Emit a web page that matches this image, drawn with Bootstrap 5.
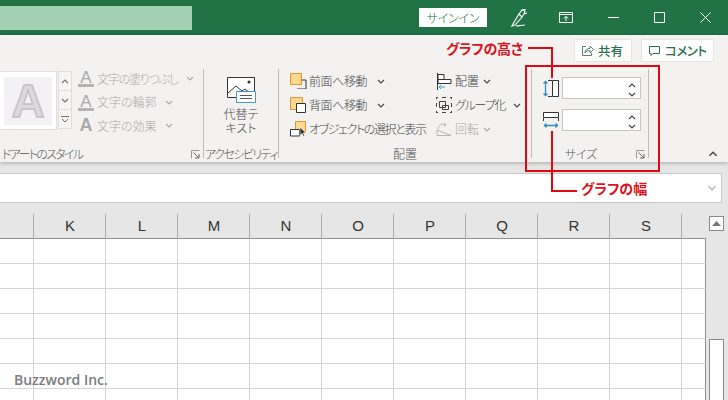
<!DOCTYPE html>
<html lang="ja">
<head>
<meta charset="utf-8">
<title>Excel</title>
<link rel="stylesheet" href="https://cdn.jsdelivr.net/npm/bootstrap@5.3.0/dist/css/bootstrap.min.css">
<style>
html,body{margin:0;width:728px;height:400px;overflow:hidden;background:#e6e6e6}
body{font-family:"Noto Sans CJK JP","Liberation Sans",sans-serif;font-size:12px;font-weight:300;line-height:14px;color:#444;font-feature-settings:"palt";position:relative}
svg{display:block;flex:none}
.xl-title{height:35px;background:#217346;padding:6px 0 5px}
.xl-search{width:192px;height:24px;background:#a3d0b4}
.xl-signin{width:68px;height:19px;background:#fff;color:#217346;margin-left:227px;margin-top:2px;line-height:19px;font-size:12px;letter-spacing:-.2px}
.xl-tbicon{position:relative}
.xl-ribbon{height:127px;background:#f3f2f1;box-shadow:0 1px 4px rgba(0,0,0,.28);position:relative}
.xl-top{height:34px;padding:4px 14px 0 0}
.xl-share{height:23px;background:#fff;border:1px solid #e6e5e4;border-radius:2px;color:#2c6e4d;font-weight:500;font-size:12.500px;padding:0 0 0 6px}
.xl-share-a{width:58px}
.xl-share-b{width:73px;margin-left:1px}
.xl-tight{letter-spacing:-.5px}
.xl-groups{height:89px}
.xl-group{height:89px;border-right:1px solid #bdbdbd;flex:none}
.xl-gbody{height:78px}
.xl-glabel{height:14px;margin-bottom:-3px;color:#555;line-height:14px;white-space:nowrap}
.xl-launch{margin-top:3px}
.xl-gallery{width:57px;height:59px;margin-top:2px;background:#fff;border:1px solid #dedede;border-left:0;padding:5px 4px}
.xl-tile{width:48px;height:48px;background:#f4f1f6;color:#dcd9de;font:700 46px/48px "Liberation Sans",sans-serif;-webkit-text-stroke:1.5px #c4c1c6;text-align:center}
.xl-spins{width:14px;margin:2px 0 0 1px}
.xl-spin{height:20px;border:1px solid #dedede;background:#f6f5f4;margin-bottom:-1px}
.xl-wa{margin:-2px 0 0 6px;color:#a8a8a8}
.xl-wa-row{height:23.5px;white-space:nowrap}
.xl-aicon{width:19px;font:400 17px/15px "Liberation Sans",sans-serif;color:#a9a9a9;text-align:center;padding-right:3px}
.xl-aicon i{display:block;height:3px;background:#b3b3b3;width:16px;margin-top:-1px}
.xl-alt{width:74px;padding-top:7px;color:#444;text-align:center}
.xl-alt-text{margin-top:3px}
.xl-arr{padding-left:11px}
.xl-cmd{height:24px;white-space:nowrap}
.xl-cmd-ic{width:19px}
.xl-col1{width:146px}
.xl-off{color:#a8a8a8}
.xl-size{padding:8px 0 0 11px}
.xl-sizerow{height:22px;margin-bottom:10px}
.xl-input{width:79px;height:22px;margin-left:3px;background:#fff;border:1px solid #c8c6c4;padding:1px 4px 0 0}
.xl-fbar{width:722px;height:30px;margin-top:11px;background:#fff;border:1px solid #c8c8c8;border-left:0;padding-right:4px}
.xl-sheet{margin-top:1px;padding-top:10px;width:706px}
.xl-scroll{width:22px;padding:12px 4px 0 3px;margin-top:1px}
.xl-up{height:15px;background:#fff;border:1px solid #8a8a8a}
.xl-thumb{height:80px;margin-top:108px;background:#fff;border:1px solid #8a8a8a}
table.xl-grid{table-layout:fixed;width:706px;border-collapse:separate;border-spacing:0;background:#fff}
.xl-grid th{height:25px;background:#e6e6e6;border-right:1px solid #ababab;border-bottom:1px solid #8f8f8f;font:400 15px/24px "Liberation Sans",sans-serif;color:#333;text-align:center;padding:0 0 0 1px}
.xl-grid td{height:25px;border-right:1px solid #d4d4d4;border-bottom:1px solid #d4d4d4;padding:0}
.xl-grid th:last-child{border-right:0}
.xl-grid td:last-child{border-right:1px solid #8f8f8f}
.xl-over{position:absolute;pointer-events:none}
.xl-red{background:#e1070f}
.xl-note{color:#dc141c;font-weight:700;font-size:14px;line-height:16px;white-space:nowrap}
.xl-mark{left:14px;top:371px;color:#7d7d7d;font:600 14px/17px "Open Sans",sans-serif}
</style>
</head>
<body>
<svg width="0" height="0" style="position:absolute">
<symbol id="cd" viewBox="0 0 8 5"><path d="M1 1l3 3 3-3" fill="none" stroke="currentColor" stroke-width="1.1"/></symbol>
<symbol id="cu" viewBox="0 0 8 5"><path d="M1 4l3-3 3 3" fill="none" stroke="currentColor" stroke-width="1.1"/></symbol>
<symbol id="la" viewBox="0 0 9 9"><path d="M.5 8.500V.5h8" fill="none" stroke="#9a9a9a"/><path d="M2.500 2.500l5 5M8 4v4H4" fill="none" stroke="#555" stroke-width=".9"/></symbol>
</svg>

<header class="xl-title d-flex align-items-start">
  <div class="xl-search"></div>
  <div class="xl-signin text-center">サインイン</div>
  <svg class="xl-tbicon ms-4" style="margin-top:3px" width="17" height="18" viewBox="0 0 17 18" fill="none" stroke="#fff" stroke-width="1.1"><path d="M2 15l-1 2 3-1 7-8-3-3zM8 5l3-4 3 1-1 3-2 3M11 1l4-1M13 5l3-1M5 17c3 0 6-1 9-1"/></svg>
  <svg class="xl-tbicon" style="margin:6px 0 0 31px" width="14" height="11" viewBox="0 0 14 11" fill="none" stroke="#fff"><path d="M.5.5h13v10H.500zM.5 2.500h13M7 9V4.500M4.800 6.500L7 4.300l2.200 2.200"/></svg>
  <svg class="xl-tbicon" style="margin:11px 0 0 35px" width="11" height="1"><path d="M0 .5h11" stroke="#fff"/></svg>
  <svg class="xl-tbicon" style="margin:6px 0 0 35px" width="11" height="11" fill="none" stroke="#fff"><path d="M.5.500h10v10H.5z"/></svg>
  <svg class="xl-tbicon" style="margin:6px 0 0 35px" width="11" height="11" fill="none" stroke="#fff"><path d="M.5.500l10 10M10.500.500l-10 10"/></svg>
</header>

<section class="xl-ribbon">
  <div class="xl-top d-flex justify-content-end gap-2">
    <div class="xl-share xl-share-a d-flex align-items-center gap-1">
      <svg width="13" height="13" viewBox="0 0 13 13" fill="none" stroke="#5d7f6d"><path d="M5 2.500H1.500v9h9V9M4 9c0-3 2-4.500 5-4.500V2l3.500 3.500L9 9V6.500C7 6.500 5 7 4 9z"/></svg>
      <span>共有</span>
    </div>
    <div class="xl-share xl-share-b d-flex align-items-center gap-1">
      <svg width="13" height="13" viewBox="0 0 13 13" fill="none" stroke="#2c6e4d"><path d="M1.500 2.500h10v7H5l-2 2v-2H1.500z"/></svg>
      <span class="xl-tight">コメント</span>
    </div>
  </div>

  <div class="xl-groups d-flex">
    <div class="xl-group" style="width:204px">
      <div class="xl-gbody d-flex">
        <div class="xl-gallery"><div class="xl-tile">A</div></div>
        <div class="xl-spins">
          <div class="xl-spin d-flex align-items-center justify-content-center text-secondary"><svg width="8" height="5"><use href="#cu"/></svg></div>
          <div class="xl-spin d-flex align-items-center justify-content-center text-secondary"><svg width="8" height="5"><use href="#cd"/></svg></div>
          <div class="xl-spin d-flex align-items-center justify-content-center text-secondary"><svg width="8" height="7" viewBox="0 0 8 7"><path d="M0 .5h8M1 3l3 3 3-3" fill="none" stroke="currentColor"/></svg></div>
        </div>
        <div class="xl-wa">
          <div class="xl-wa-row d-flex align-items-center"><div class="xl-aicon">A<i></i></div><span style="letter-spacing:-1.200px">文字の塗りつぶし</span><svg class="ms-2" width="8" height="5"><use href="#cd"/></svg></div>
          <div class="xl-wa-row d-flex align-items-center"><div class="xl-aicon">A<i></i></div><span>文字の輪郭</span><svg class="ms-2" width="8" height="5"><use href="#cd"/></svg></div>
          <div class="xl-wa-row d-flex align-items-center"><div class="xl-aicon" style="font-size:18px;font-weight:700">A</div><span>文字の効果</span><svg class="ms-2" width="8" height="5"><use href="#cd"/></svg></div>
        </div>
      </div>
      <div class="xl-glabel d-flex justify-content-between" style="padding:0 3px 0 2px"><span style="letter-spacing:-1.700px">ドアートのスタイル</span><svg class="xl-launch" width="9" height="9"><use href="#la"/></svg></div>
    </div>

    <div class="xl-group" style="width:75px">
      <div class="xl-gbody xl-alt">
        <svg class="mx-auto" width="32" height="28" viewBox="0 0 32 28"><path d="M2.500 1.500h27v20h-27z" fill="#fff" stroke="#333"/><path d="M3 17l8-7 6 5 3-2 5 4" fill="none" stroke="#333"/><circle cx="24" cy="6" r="1.500" fill="#333"/><path d="M11.500 15.500h19v11h-19z" fill="#fff" stroke="#3c9ccb"/><path d="M15 19.500h12M15 22.500h12" stroke="#555"/></svg>
        <div class="xl-alt-text">代替テ<br>キスト</div>
      </div>
      <div class="xl-glabel text-center" style="letter-spacing:-1.500px">アクセシビリティ</div>
    </div>

    <div class="xl-group" style="width:253px">
      <div class="xl-gbody xl-arr d-flex">
        <div class="xl-col1">
          <div class="xl-cmd d-flex align-items-center">
            <div class="xl-cmd-ic"><svg width="17" height="16" viewBox="0 0 17 16"><path d="M7 7h9v9H7" fill="none" stroke="#333"/><path d="M.5.500h11v11H.500z" fill="#fcd98e" stroke="#e2942d"/></svg></div>
            <span style="letter-spacing:-.4px">前面へ移動</span><svg style="margin-left:10px" width="8" height="5"><use href="#cd"/></svg>
          </div>
          <div class="xl-cmd d-flex align-items-center">
            <div class="xl-cmd-ic"><svg width="17" height="16" viewBox="0 0 17 16"><path d="M.5.500h12v12H.500z" fill="#fcd98e" stroke="#e2942d"/><path d="M6.500 6.500h9v9h-9z" fill="#fff" stroke="#333"/></svg></div>
            <span style="letter-spacing:-.4px">背面へ移動</span><svg style="margin-left:10px" width="8" height="5"><use href="#cd"/></svg>
          </div>
          <div class="xl-cmd d-flex align-items-center">
            <div class="xl-cmd-ic"><svg width="18" height="16" viewBox="0 0 18 16"><path d="M5.500.500h10v10h-10z" fill="#fcd98e" stroke="#e2942d"/><path d="M.5 8.500h9v6.500h-9z" fill="#fff" stroke="#333"/><path d="M10 6v8.500l2-2 1.300 2.800 1.300-.7-1.300-2.700h2.400z" fill="#333" stroke="#fff" stroke-width=".6"/></svg></div>
            <span style="letter-spacing:-1.400px">オブジェクトの選択と表示</span>
          </div>
        </div>
        <div>
          <div class="xl-cmd d-flex align-items-center">
            <div class="xl-cmd-ic"><svg width="17" height="17" viewBox="0 0 17 17"><path d="M1.500 0v17" stroke="#333"/><path d="M2 1.500h6v5H2zM2 6.500h13v4H2z" fill="#fff" stroke="#333"/><path d="M9 14H3M5 12l-2 2 2 2" fill="none" stroke="#3c9ccb"/></svg></div>
            <span>配置</span><svg class="ms-1" width="8" height="5"><use href="#cd"/></svg>
          </div>
          <div class="xl-cmd d-flex align-items-center">
            <div class="xl-cmd-ic"><svg width="16" height="16" viewBox="0 0 16 16" fill="none" stroke="#444"><path d="M.5 0v2M.5 6v4M.5 14v2M0 .500h2M6 .500h4M14 .500h2M15.500 0v2M15.500 6v4M15.500 14v2M0 15.500h2M6 15.500h4M14 15.500h2"/><path d="M3.500 4.500h6v6h-6zM6.500 8.500h6v4h-6z"/></svg></div>
            <span style="letter-spacing:-1.200px">グループ化</span><svg class="ms-2" width="8" height="5"><use href="#cd"/></svg>
          </div>
          <div class="xl-cmd d-flex align-items-center xl-off">
            <div class="xl-cmd-ic"><svg width="16" height="15" viewBox="0 0 16 15" fill="none" stroke="#b5b5b5"><path d="M1 13.500h14L1 8zM2 7c0-4 4-6 8-4M8 1l2 2-2 2"/></svg></div>
            <span>回転</span><svg class="ms-1" width="8" height="5"><use href="#cd"/></svg>
          </div>
        </div>
      </div>
      <div class="xl-glabel text-center">配置</div>
    </div>

    <div class="xl-group" style="width:117px">
      <div class="xl-gbody xl-size">
        <div class="xl-sizerow d-flex align-items-center">
          <svg width="16" height="17" viewBox="0 0 16 17"><path d="M2.500 1v15M.5 3.500l2-2 2 2M.5 13.500l2 2 2-2" fill="none" stroke="#2f8fc4" stroke-width="1.300"/><path d="M5 .5h4M5 16.500h4" stroke="#333"/><path d="M9.500.500h6v16h-6z" fill="#fff" stroke="#333"/></svg>
          <div class="xl-input d-flex flex-column align-items-end gap-1 pe-1"><svg class="mt-1" width="8" height="5"><use href="#cu"/></svg><svg width="8" height="5"><use href="#cd"/></svg></div>
        </div>
        <div class="xl-sizerow d-flex align-items-center">
          <svg width="16" height="17" viewBox="0 0 16 17"><path d="M.5.500h15v5H.5z" fill="#fff" stroke="#333"/><path d="M.5 6v3M15.500 6v3" stroke="#333"/><path d="M1 13.500h14M3.500 11.500l-2 2 2 2M12.500 11.500l2 2-2 2" fill="none" stroke="#2f8fc4" stroke-width="1.300"/></svg>
          <div class="xl-input d-flex flex-column align-items-end gap-1 pe-1"><svg class="mt-1" width="8" height="5"><use href="#cu"/></svg><svg width="8" height="5"><use href="#cd"/></svg></div>
        </div>
      </div>
      <div class="xl-glabel d-flex"><span class="text-center" style="width:98px">サイズ</span><svg class="xl-launch" style="margin-left:6px" width="9" height="9"><use href="#la"/></svg></div>
    </div>
    <div class="flex-grow-1 d-flex justify-content-end align-items-end" style="padding:0 10px 0 0;color:#444"><svg width="10" height="6" style="margin-bottom:1px"><use href="#cu"/></svg></div>
  </div>
</section>

<div class="xl-fbar d-flex align-items-center justify-content-end text-secondary"><svg width="10" height="6" style="color:#b5b5b5"><use href="#cd"/></svg></div>

<div class="d-flex">
  <div class="xl-sheet">
    <table class="xl-grid">
      <colgroup><col style="width:34px"><col span="9" style="width:72px"><col style="width:24px"></colgroup>
      <thead><tr><th></th><th>K</th><th>L</th><th>M</th><th>N</th><th>O</th><th>P</th><th>Q</th><th>R</th><th>S</th><th></th></tr></thead>
      <tbody>
        <tr><td></td><td></td><td></td><td></td><td></td><td></td><td></td><td></td><td></td><td></td><td></td></tr>
        <tr><td></td><td></td><td></td><td></td><td></td><td></td><td></td><td></td><td></td><td></td><td></td></tr>
        <tr><td></td><td></td><td></td><td></td><td></td><td></td><td></td><td></td><td></td><td></td><td></td></tr>
        <tr><td></td><td></td><td></td><td></td><td></td><td></td><td></td><td></td><td></td><td></td><td></td></tr>
        <tr><td></td><td></td><td></td><td></td><td></td><td></td><td></td><td></td><td></td><td></td><td></td></tr>
        <tr><td></td><td></td><td></td><td></td><td></td><td></td><td></td><td></td><td></td><td></td><td></td></tr>
        <tr><td></td><td></td><td></td><td></td><td></td><td></td><td></td><td></td><td></td><td></td><td></td></tr>
      </tbody>
    </table>
  </div>
  <div class="xl-scroll">
    <div class="xl-up d-flex align-items-center justify-content-center"><svg width="9" height="5"><path d="M0 5l4.500-5L9 5z" fill="#777"/></svg></div>
    <div class="xl-thumb"></div>
  </div>
</div>

<div class="xl-over xl-mark">Buzzword Inc.</div>

<div class="xl-over" style="left:525px;top:65px;width:135px;height:107px;border:2px solid #e1070f"></div>
<div class="xl-over xl-note" style="left:446px;top:40px;letter-spacing:-.3px">グラフの高さ</div>
<div class="xl-over xl-red" style="left:528px;top:47px;width:25px;height:2px"></div>
<div class="xl-over xl-red" style="left:551px;top:47px;width:2px;height:31px"></div>
<div class="xl-over xl-red" style="left:551px;top:131px;width:2px;height:61px"></div>
<div class="xl-over xl-red" style="left:551px;top:190px;width:26px;height:2px"></div>
<div class="xl-over xl-note" style="left:581px;top:180px">グラフの幅</div>
</body>
</html>
